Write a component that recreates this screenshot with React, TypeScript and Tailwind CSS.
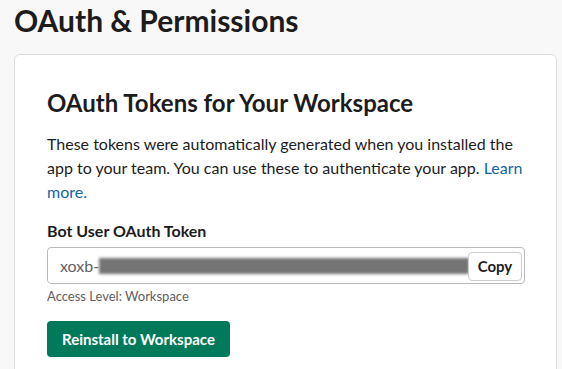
import React from "react";

export default function App() {
  return (
    <div
      className="w-[562px] h-[369px] overflow-hidden bg-[#f8f8f8] text-[#1d1c1d]"
      style={{ fontFamily: "Lato, 'Noto Sans', sans-serif" }}
    >
      <div className="px-[14px]">
        <h1 className="text-[30px] font-bold leading-[40px]">OAuth &amp; Permissions</h1>
        <div className="mt-[14px] bg-white border border-[#dddddd] rounded-[6px] px-[32px] pt-[30px] pb-[40px] w-[543px]">
          <h2 className="text-[24px] font-bold leading-[36px]">OAuth Tokens for Your Workspace</h2>
          <p className="mt-[11px] text-[16px] leading-[24px] w-[478px]">
            These tokens were automatically generated when you installed the app to your team. You can use these to authenticate your app.{" "}
            <a className="text-[#1264a3]">Learn more.</a>
          </p>
          <div className="mt-[15px] text-[16px] font-bold leading-[24px]">Bot User OAuth Token</div>
          <div className="mt-[4px] relative w-[478px] h-[37px] border border-[#bbbbbb] rounded-[4px] flex items-center">
            <span className="pl-[12px] text-[16px] text-[#616061]">xoxb-</span>
            <div className="h-[16px] w-[370px] bg-[#747474] blur-[1.5px]"></div>
            <button className="absolute right-[2px] top-[4px] h-[29px] w-[54px] bg-white border border-[#cccccc] rounded-[4px] text-[15px] font-bold text-[#1d1c1d]">
              Copy
            </button>
          </div>
          <div className="mt-[3px] text-[13px] leading-[18px] text-[#616061]">Access Level: Workspace</div>
          <button className="mt-[16px] h-[36px] px-[15px] bg-[#007a5a] rounded-[4px] text-white text-[15px] font-bold">
            Reinstall to Workspace
          </button>
        </div>
      </div>
    </div>
  );
}
